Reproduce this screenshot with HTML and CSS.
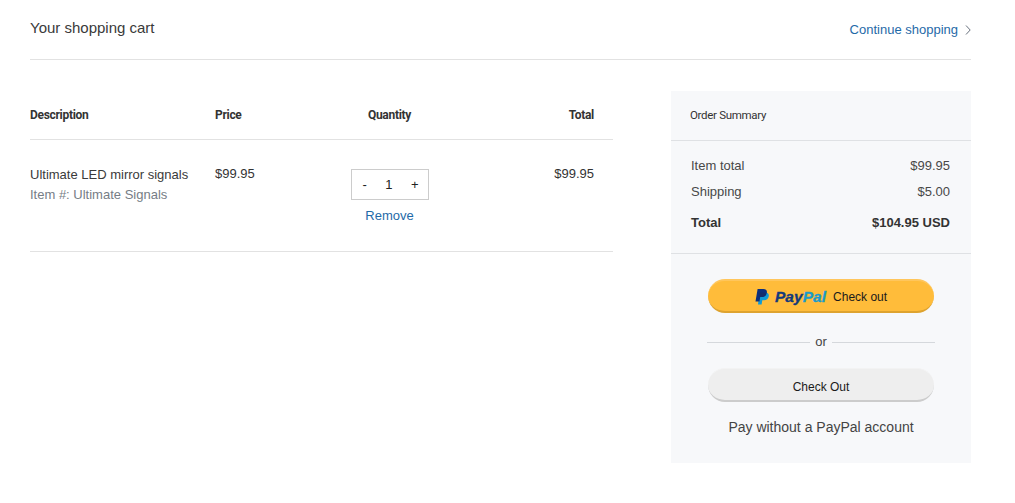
FILE: index.html
```html
<!DOCTYPE html>
<html lang="en">
<head>
<meta charset="utf-8">
<title>Your shopping cart</title>
<link rel="stylesheet" href="styles.css">
</head>
<body>
<div class="page">
  <header class="top">
    <h1 class="title">Your shopping cart</h1>
    <a class="continue" href="#">Continue shopping
      <svg class="chev" width="6" height="10" viewBox="0 0 6 10"><path d="M1 .5 5.2 5 1 9.5" fill="none" stroke="#67707c" stroke-width="1"/></svg>
    </a>
  </header>
  <main class="content">
    <section class="cart">
      <div class="row head">
        <div class="c-desc">Description</div>
        <div class="c-price">Price</div>
        <div class="c-qty">Quantity</div>
        <div class="c-total">Total</div>
      </div>
      <div class="row item">
        <div class="c-desc">
          <div class="name">Ultimate LED mirror signals</div>
          <div class="sku">Item #: Ultimate Signals</div>
        </div>
        <div class="c-price nudge">$99.95</div>
        <div class="c-qty">
          <div class="stepper"><span>-</span><span>1</span><span>+</span></div>
          <a class="remove" href="#">Remove</a>
        </div>
        <div class="c-total nudge">$99.95</div>
      </div>
    </section>
    <aside class="summary">
      <div class="sum-title">Order Summary</div>
      <div class="sum-lines">
        <div class="line"><span>Item total</span><span>$99.95</span></div>
        <div class="line"><span>Shipping</span><span>$5.00</span></div>
        <div class="line grand"><span>Total</span><span>$104.95 USD</span></div>
      </div>
      <div class="actions">
        <button class="btn pp" type="button">
          <svg class="pp-mark" width="15" height="17" viewBox="0 0 15 17">
            <path d="M4.6 3.6h5.6c2.6 0 4 1.4 3.6 3.6-.5 2.7-2.3 4-4.8 4H7.3l-.7 4.2H3z" fill="#0f9bd7"/>
            <path d="M2.6 0h5.7c2.6 0 4 1.4 3.6 3.7-.5 2.8-2.3 4.2-4.9 4.2H5.2l-.7 4.6H.5z" fill="#0b2f7d"/>
            <path d="M4.7 3.6 4.1 7.9h1.8l.4 0c2.2 0 3.8-.8 4.6-2.2-.4-1.4-1.6-2.1-3.3-2.1z" fill="#142c6b"/>
          </svg>
          <span class="pp-word"><span class="pp-pay">Pay</span><span class="pp-pal">Pal</span></span>
          <span class="pp-label">Check out</span>
        </button>
        <div class="or"><span>or</span></div>
        <button class="btn plain" type="button">Check Out</button>
        <div class="nopp">Pay without a PayPal account</div>
      </div>
    </aside>
  </main>
</div>
</body>
</html>
```
FILE: styles.css
```css
* { box-sizing: border-box; }
html, body { margin: 0; padding: 0; background: #fff; }
body { font-family: "Liberation Sans", Arial, sans-serif; color: #333; font-size: 13px; }
.page { width: 941px; margin-left: 30px; }
a { color: #1f6aa8; text-decoration: none; }

.top { height: 60px; border-bottom: 1px solid #e2e2e2; display: flex; justify-content: space-between; padding-top: 19px; }
.title { margin: 0; font-size: 15px; font-weight: 400; line-height: 18px; color: #3a3a3a; }
.continue { font-size: 13px; line-height: 16px; padding-top: 3px; display: flex; align-items: center; height: 19px; gap: 7px; }
.chev { display: block; }

.content { display: flex; justify-content: space-between; align-items: flex-start; padding-top: 31px; }
.cart { width: 583px; }
.row { display: flex; border-bottom: 1px solid #e2e2e2; }
.head { height: 49px; padding-top: 17px; font-family: Roboto, sans-serif; font-weight: 700; font-size: 12px; line-height: 15px; letter-spacing: -.3px; color: #333; }
.item { height: 112px; padding-top: 25px; line-height: 20px; }
.c-desc { width: 185px; }
.c-price { width: 100px; }
.c-qty { width: 149px; display: flex; flex-direction: column; align-items: center; }
.c-total { width: 130px; text-align: right; }
.nudge { margin-top: -1px; }
.name { color: #3a3a3a; }
.sku { color: #767d86; }
.stepper { margin-top: 4px; width: 78px; height: 31px; border: 1px solid #ccc; display: flex; justify-content: space-between; align-items: center; padding: 0 9px 0 11px; color: #222; font-size: 13px; }
.remove { margin-top: 8px; font-size: 13px; line-height: 16px; }

.summary { width: 300px; height: 372px; background: #f7f8fa; }
.sum-title { height: 50px; border-bottom: 1px solid #dfe1e4; padding: 17px 19px 0; font-family: Roboto, sans-serif; font-size: 11.5px; line-height: 15px; letter-spacing: -.3px; color: #333; }
.sum-lines { height: 113px; padding: 17px 21px 0 20px; border-bottom: 1px solid #dfe1e4; }
.line { display: flex; justify-content: space-between; line-height: 16px; margin-bottom: 10px; color: #484848; }
.grand { font-weight: 700; margin-top: 15px; color: #333; }

.actions { padding: 25px 36px 0; display: flex; flex-direction: column; align-items: stretch; }
.btn { display: flex; align-items: center; justify-content: center; height: 34px; margin: 0 1px; border-radius: 17px; border: 0; font-family: "Liberation Sans", sans-serif; font-size: 12px; color: #1a1a1a; padding: 0; }
.pp { background: #ffbc3a; border-top: 2px solid #ffc65c; border-bottom: 2px solid #dea32f; padding-top: 2px; }
.pp-mark { margin-right: 5px; }
.pp-word { font-weight: 700; font-style: italic; font-size: 15.5px; letter-spacing: .05px; margin-right: 7px; -webkit-text-stroke: .3px currentColor; }
.pp-pay { color: #143a7b; }
.pp-pal { color: #1b9bc9; }
.or { margin-top: 21px; display: flex; align-items: center; gap: 5px; line-height: 16px; color: #444; font-size: 13px; }
.or::before, .or::after { content: ""; flex: 1; height: 1px; background: #d5d8dc; }
.plain { margin-top: 18px; padding-top: 4px; background: #eee; border-top: 1px solid #f3f3f3; border-bottom: 2px solid #ccc; }
.nopp { margin-top: 16px; text-align: center; font-size: 14px; line-height: 18px; color: #444; }
```
